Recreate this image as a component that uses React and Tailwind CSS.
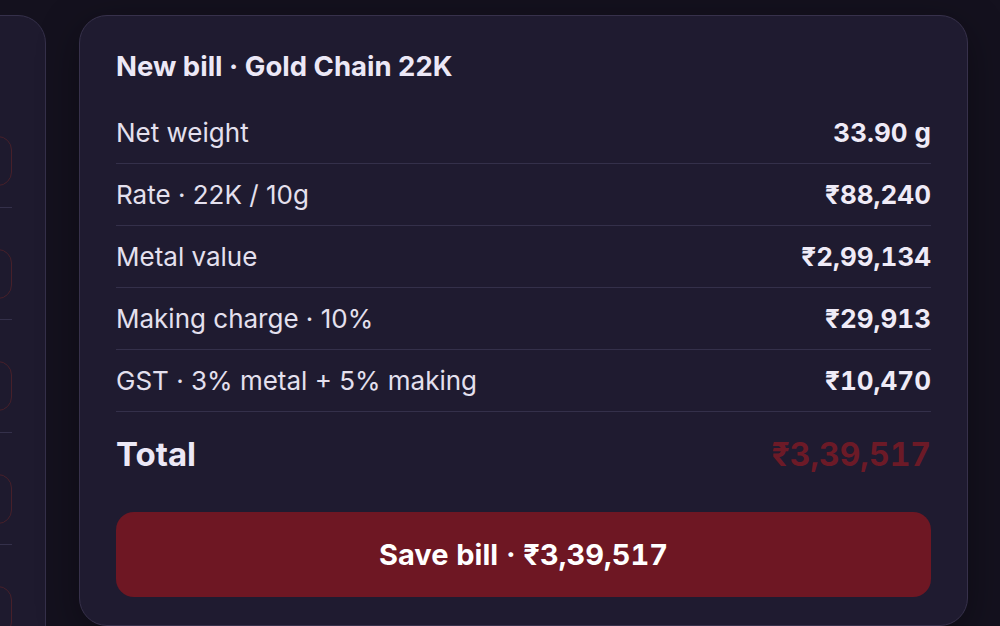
import React from "react";

const rows = [
  ["Net weight", "33.90 g"],
  ["Rate · 22K / 10g", "₹88,240"],
  ["Metal value", "₹2,99,134"],
  ["Making charge · 10%", "₹29,913"],
  ["GST · 3% metal + 5% making", "₹10,470"],
];

export default function App() {
  return (
    <div
      className="h-[626px] w-[1000px] overflow-hidden bg-[#14111e] flex items-start gap-[33px] pt-[15px]"
      style={{ fontFamily: "Inter, 'Noto Sans', sans-serif" }}
    >
      <div className="w-[400px] -ml-[354px] shrink-0 h-[700px] rounded-tr-[28px] border border-[#35304a] bg-[#1e1a2e] pr-[33px] pt-[79px] flex flex-col">
        {[0, 1, 2, 3, 4].map((i) => (
          <div
            key={i}
            className="h-[112.5px] shrink-0 border-b border-[#34304a] flex justify-end pt-[41px]"
          >
            <div className="w-[50px] h-[50px] rounded-[14px] border border-[#47202a]" />
          </div>
        ))}
      </div>

      <div className="w-[889px] shrink-0 rounded-[28px] border border-[#37314b] bg-[#1f1b30] px-9 pt-9 pb-7 shadow-[0_10px_40px_rgba(0,0,0,0.35)]">
        <div className="text-[27.5px] leading-[28px] font-bold text-[#ece8f6]">
          New bill · Gold Chain 22K
        </div>
        <div className="mt-[22px]">
          {rows.map(([l, v]) => (
            <div
              key={l}
              className="h-[62px] flex items-center justify-between border-b border-[#34304a]"
            >
              <span className="text-[26px] text-[#e4e0ee]">{l}</span>
              <span className="text-[26px] font-bold tabular-nums text-[#efebf7]">{v}</span>
            </div>
          ))}
        </div>
        <div className="h-[86px] flex items-center justify-between">
          <span className="text-[33px] font-bold text-[#ece8f6]">Total</span>
          <span className="text-[32px] font-bold tabular-nums text-[#6c1a27]">₹3,39,517</span>
        </div>
        <button className="mt-[14px] w-full h-[85px] rounded-[18px] bg-[#6e1723] text-white text-[29px] font-bold tabular-nums">
          Save bill · ₹3,39,517
        </button>
      </div>
    </div>
  );
}
